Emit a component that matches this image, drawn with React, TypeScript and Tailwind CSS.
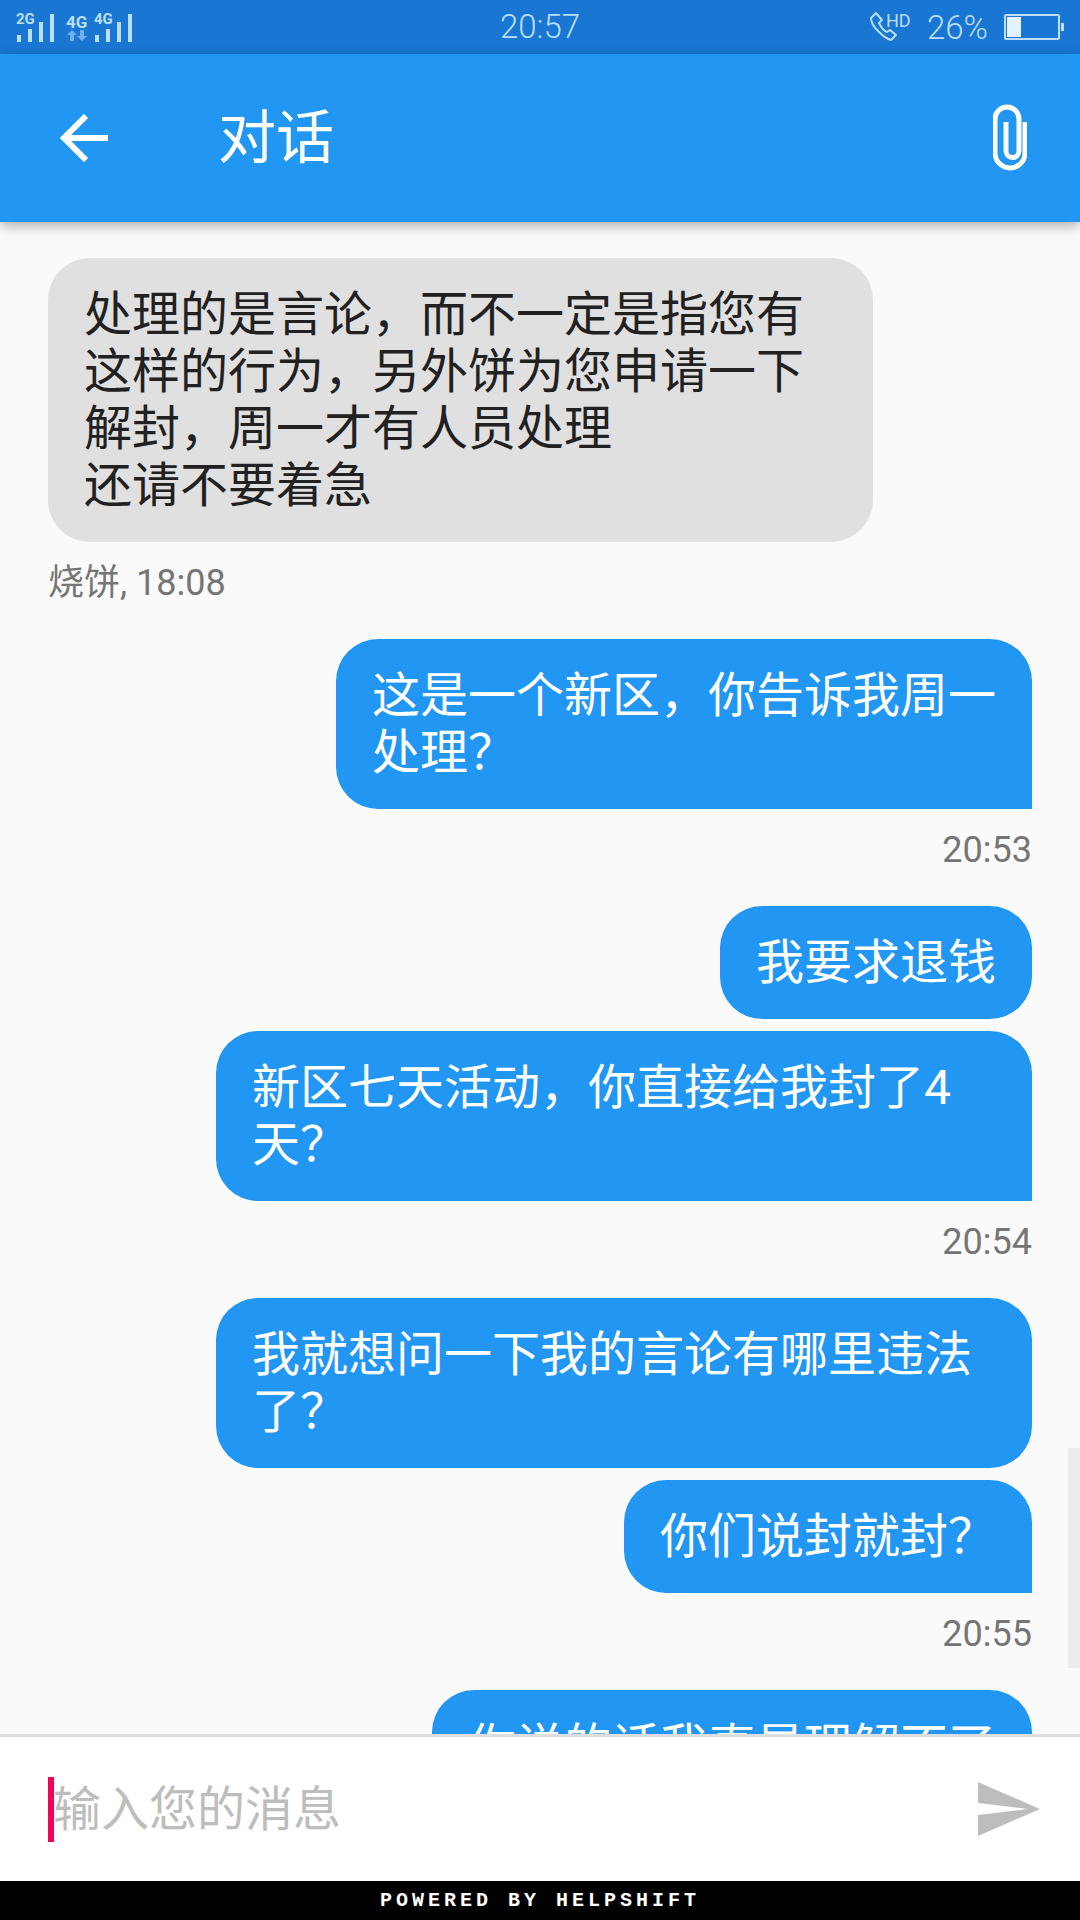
const cjk = "font-['Roboto','Noto_Sans_CJK_SC',sans-serif]";

function StatusIcons() {
  return (
    <svg width="120" height="36" viewBox="0 0 120 36" className="ml-[14px]" fill="#bbdefb">
      <text x="2" y="15" fontSize="15" fontWeight="700" fontFamily="Roboto">2G</text>
      <rect x="3" y="26" width="4" height="7" />
      <rect x="14" y="20" width="4" height="13" />
      <rect x="25" y="13" width="4" height="20" />
      <rect x="36" y="5" width="4" height="28" />
      <text x="52" y="19" fontSize="17" fontWeight="700" fontFamily="Roboto">4G</text>
      <path d="M58 21l5 5h-3v6h-4v-6h-3zM68 32l5-5h-3v-6h-4v6h-3z" opacity="0.55" />
      <text x="80" y="15" fontSize="15" fontWeight="700" fontFamily="Roboto">4G</text>
      <rect x="81" y="26" width="4" height="7" />
      <rect x="92" y="20" width="4" height="13" />
      <rect x="103" y="13" width="4" height="20" />
      <rect x="114" y="5" width="4" height="28" />
    </svg>
  );
}

function CallIcon() {
  return (
    <svg width="44" height="32" viewBox="0 0 44 32" fill="none" stroke="#bbdefb" strokeWidth="2">
      <path d="M7 2L2 7c0 4 3 9 7 13s8 8 13 9l5-5-6-5-3 2c-3-1-6-5-8-9l3-3z" strokeLinejoin="round" />
      <text x="17" y="16" fontSize="18" fontFamily="Roboto" fill="#bbdefb" stroke="none">HD</text>
    </svg>
  );
}

function Battery() {
  return (
    <div className="flex items-center">
      <div className="h-[26px] w-[56px] rounded-[2px] border-2 border-[#bbdefb] p-[1px]">
        <div className="h-full w-[14px] bg-[#e3f2fd]" />
      </div>
      <div className="ml-[1px] h-[8px] w-[3px] bg-[#bbdefb]" />
    </div>
  );
}

function StatusBar() {
  return (
    <div className="relative flex h-[54px] shrink-0 items-center justify-between bg-[#1976d2] pr-[16px]">
      <StatusIcons />
      <div className="absolute left-0 right-0 text-center font-['Roboto'] text-[33px] font-light leading-[54px] text-[#bbdefb]">
        20:57
      </div>
      <div className="flex items-center">
        <CallIcon />
        <span className="ml-[14px] mr-[16px] font-['Roboto'] text-[33px] font-light leading-none text-[#bbdefb]">26%</span>
        <Battery />
      </div>
    </div>
  );
}

function AppBar() {
  return (
    <header className="relative z-10 flex h-[168px] shrink-0 items-center bg-[#2196f3] pl-[60px] pr-[53px] shadow-[0_4px_12px_rgba(0,0,0,0.3)]">
      <svg width="48" height="48" viewBox="0 0 48 48" fill="none" stroke="white" strokeWidth="6">
        <path d="M48 24H4" />
        <path d="M26 2L4 24l22 22" />
      </svg>
      <h1 className={`ml-[110px] flex-1 text-[58px] font-normal leading-none text-white ${cjk}`}>对话</h1>
      <svg width="34" height="68" viewBox="0 0 34 68" fill="none" stroke="white" strokeWidth="5">
        <path d="M32 18v31a15 15 0 0 1-30 0V15a12 12 0 0 1 24 0v32a6.500 6.500 0 0 1-13 0V18" />
      </svg>
    </header>
  );
}

function Meta({ children, right }: { children: string; right?: boolean }) {
  return (
    <div className={`mt-[12px] mb-[27px] text-[36px] leading-[58px] text-[#757575] ${right ? 'text-right' : ''}`}>
      {children}
    </div>
  );
}

function Sent({ children, className }: { children: string; className: string }) {
  return (
    <div className={`ml-auto rounded-[42px] bg-[#2196f3] px-[36px] py-[28px] text-white ${className}`}>
      {children}
    </div>
  );
}

function ChatList() {
  return (
    <main className={`relative flex-1 overflow-hidden bg-[#fafafa] pl-[48px] pr-[48px] pt-[36px] text-[48px] leading-[57px] ${cjk}`}>
      <div className="w-[825px] whitespace-pre-line rounded-[42px] bg-[#e0e0e0] py-[28px] pl-[36px] pr-[60px] text-[#212121]">
        {'处理的是言论，而不一定是指您有这样的行为，另外饼为您申请一下解封，周一才有人员处理\n还请不要着急'}
      </div>
      <Meta>烧饼, 18:08</Meta>

      <Sent className="w-[696px] rounded-br-none">这是一个新区，你告诉我周一处理？</Sent>
      <Meta right>20:53</Meta>

      <Sent className="w-[312px]">我要求退钱</Sent>
      <Sent className="mt-[12px] w-[816px] rounded-br-none">新区七天活动，你直接给我封了4天？</Sent>
      <Meta right>20:54</Meta>

      <Sent className="w-[816px]">我就想问一下我的言论有哪里违法了？</Sent>
      <Sent className="mt-[12px] w-[408px] rounded-br-none">你们说封就封？</Sent>
      <Meta right>20:55</Meta>

      <Sent className="w-[600px]">你说的话我真是理解不了</Sent>

      {/* scroll thumb */}
      <div className="absolute right-0 top-[1226px] h-[220px] w-[12px] bg-[#ececec]" />
    </main>
  );
}

function Composer() {
  return (
    <div className="flex h-[147px] shrink-0 items-center justify-between border-t-[3px] border-[#dedede] bg-white pl-[53px] pr-[40px]">
      <div className="relative">
        <span className={`text-[48px] leading-[65px] text-[#bdbdbd] ${cjk}`}>输入您的消息</span>
        <div className="absolute -left-[5px] top-0 h-[65px] w-[6px] bg-[#f50057]" />
      </div>
      <svg width="62" height="54" viewBox="0 0 62 54" fill="#bdbdbd">
        <path d="M0 0l62 27L0 54V33l50-6L0 21z" />
      </svg>
    </div>
  );
}

export default function App() {
  return (
    <div className="flex h-[1920px] w-[1080px] flex-col overflow-hidden">
      <StatusBar />
      <AppBar />
      <ChatList />
      <Composer />
      <footer className="flex h-[39px] shrink-0 items-center justify-center bg-black font-['Liberation_Mono',monospace] text-[20px] font-bold tracking-[4px] text-white">
        POWERED BY HELPSHIFT
      </footer>
    </div>
  );
}
